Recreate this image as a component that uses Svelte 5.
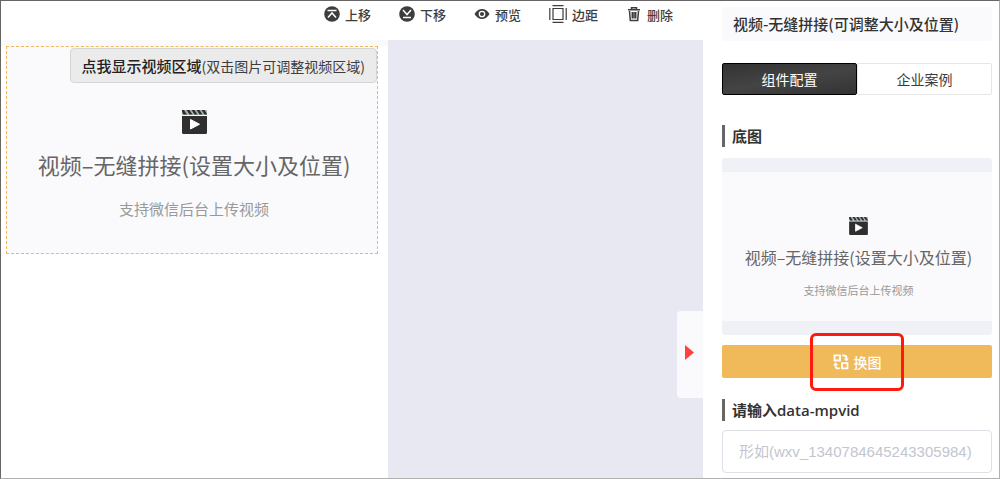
<script>
	let tab = $state('config');
	let mpvid = $state('');
	let panelOpen = $state(true);
</script>

{#snippet clapper()}
	<svg class="clapper" viewBox="0 0 25 24" aria-hidden="true">
		<path fill="#2f2f2f" d="M0 6h25v16.500q0 1.500-1.500 1.500h-22Q0 24 0 22.500z" />
		<path fill="#a9b5b1" d="M0 0h25v5H0z" />
		<path
			fill="#2f2f2f"
			d="M0 0h2l3 4.500H1.500L0 2zM4.500 0h3l3 4.500h-3zM9.500 0h3l3 4.500h-3zM14.500 0h3l3 4.500h-3zM19.500 0h3L25 4v.5h-2.500z"
		/>
		<path fill="#fff" stroke="#fff" stroke-linejoin="round" d="M8.500 9.500v9.500l9-4.750z" />
	</svg>
{/snippet}

{#snippet cover()}
	{@render clapper()}
	<p class="cover-title">视频–无缝拼接(设置大小及位置)</p>
	<p class="cover-note">支持微信后台上传视频</p>
{/snippet}

<div class="editor">
	<main>
		<div class="toolbar">
			<button type="button">
				<svg viewBox="0 0 16 16" aria-hidden="true">
					<circle cx="8" cy="8" r="7.800" fill="#3d3d3d" />
					<path d="M3.500 4.500h9M4 11.500l4-4.500 4 4.500" fill="none" stroke="#fff" stroke-width="1.500" />
				</svg>
				上移
			</button>
			<button type="button">
				<svg viewBox="0 0 16 16" aria-hidden="true">
					<circle cx="8" cy="8" r="7.800" fill="#3d3d3d" />
					<path d="M4 4l4 4.500L12 4M4 11.500h8" fill="none" stroke="#fff" stroke-width="1.500" />
				</svg>
				下移
			</button>
			<button type="button">
				<svg viewBox="0 0 16 16" aria-hidden="true">
					<path fill="#3d3d3d" d="M.5 8Q3.500 3 8 3t7.500 5Q12.500 13 8 13T.5 8z" />
					<circle cx="8" cy="8" r="2.700" fill="#3d3d3d" stroke="#fff" stroke-width="1.300" />
				</svg>
				预览
			</button>
			<button type="button">
				<svg class="wide" viewBox="0 0 18 18" aria-hidden="true">
					<path
						fill="none"
						stroke="#3d3d3d"
						stroke-width="1.200"
						d="M4 3.500h10v11H4zM3.500.7h11M3.500 17.300h11M.8 3v12M17.200 3v12"
					/>
				</svg>
				边距
			</button>
			<button type="button">
				<svg viewBox="0 0 16 16" aria-hidden="true">
					<path
						fill="none"
						stroke="#3d3d3d"
						stroke-width="1.500"
						d="M2 3.800h12M5.500 3.500V1.700h5v1.800M3.500 5l.8 9.500h7.400l.8-9.500M6.300 6v6.500M8 6v6.500M9.700 6v6.500"
					/>
				</svg>
				删除
			</button>
		</div>

		<div class="stage">
			<div class="page">
				<div class="block">
					<button type="button" class="reveal"><b>点我显示视频区域</b>(双击图片可调整视频区域)</button>
					{@render cover()}
				</div>
			</div>
			<button
				type="button"
				class="handle"
				aria-label="收起面板"
				aria-expanded={panelOpen}
				onclick={() => (panelOpen = !panelOpen)}
			>
				<svg viewBox="0 0 9 15" aria-hidden="true"><path fill="#ff4040" d="M0 0l9 7.500L0 15z" /></svg>
			</button>
		</div>
	</main>

	{#if panelOpen}
		<aside>
			<h1>视频-无缝拼接(可调整大小及位置)</h1>

			<div class="tabs" role="tablist">
				<button
					type="button"
					role="tab"
					aria-selected={tab === 'config'}
					class:active={tab === 'config'}
					onclick={() => (tab = 'config')}>组件配置</button
				>
				<button
					type="button"
					role="tab"
					aria-selected={tab === 'cases'}
					class:active={tab === 'cases'}
					onclick={() => (tab = 'cases')}>企业案例</button
				>
			</div>

			<h2>底图</h2>
			<div class="thumb">
				<div class="thumb-inner">{@render cover()}</div>
			</div>

			<div class="swap-row">
				<button type="button" class="swap">
					<svg viewBox="0 0 16 16" aria-hidden="true">
						<path
							fill="none"
							stroke="#fff"
							stroke-width="1.800"
							d="M1.500 1.300h5.500v5.200h-5.500zM9 9.200h5.500v5.200h-5.500zM9.200 1.500h1.800q2.500 0 2.500 2.500v2M6.800 14.400h-1.800q-2.500 0-2.500-2.500v-2"
						/>
						<path fill="#fff" d="M10.800 4.600h5.200l-2.600 3zM0 11.300h5.200l-2.600-3z" />
					</svg>
					换图
				</button>
				<span class="marker"></span>
			</div>

			<h2><label for="mpvid">请输入data-mpvid</label></h2>
			<input id="mpvid" type="text" placeholder="形如(wxv_1340784645243305984)" bind:value={mpvid} />
		</aside>
	{/if}
</div>

<style>
	:global(body) {
		margin: 0;
		background: #fff;
		color: #3d3d3d;
		font-family: 'Noto Sans CJK SC', sans-serif;
	}

	.editor {
		box-sizing: border-box;
		display: flex;
		min-height: 100vh;
		border: 1px solid #b0b0b0;
		border-top-color: #666;
		border-left-color: #666;
	}

	main {
		display: flex;
		flex: 1;
		flex-direction: column;
		min-width: 0;
	}

	button {
		padding: 0;
		border: 0;
		background: none;
		color: inherit;
		font-family: inherit;
		cursor: pointer;
	}

	h1,
	h2,
	p {
		margin: 0;
	}

	.toolbar {
		display: flex;
		justify-content: flex-end;
		gap: 28px;
		height: 39px;
		padding-right: 30px;
	}

	.toolbar button {
		display: flex;
		align-items: center;
		gap: 5px;
		height: 26px;
		font-size: 13px;
		font-weight: 500;
	}

	.toolbar svg {
		width: 16px;
		height: 16px;
	}

	.toolbar .wide {
		width: 18px;
		height: 18px;
	}

	.stage {
		display: flex;
		flex: 1;
		align-items: stretch;
		justify-content: space-between;
		background: #e7e8f2;
	}

	.page {
		box-sizing: border-box;
		width: 387px;
		padding: 0 10px 0 5px;
		border-top: 6px solid #fafafa;
		background: #fff;
	}

	.block {
		position: relative;
		display: flex;
		box-sizing: border-box;
		flex-direction: column;
		align-items: center;
		min-height: 208px;
		padding: 63px 0 0 4px;
		border: 1px dashed #f0b959;
		background: #fafafc;
	}

	.reveal {
		position: absolute;
		top: 1px;
		right: 0;
		height: 35px;
		padding: 0 11px;
		border: 1px solid #d6d6d6;
		border-radius: 4px;
		background: #ebebeb;
		font-size: 14px;
		line-height: 30px;
		white-space: nowrap;
	}

	.reveal b {
		font-size: 15px;
		font-weight: 500;
		color: #222;
	}

	.clapper {
		width: 25px;
		height: 24px;
	}

	.cover-title {
		margin-top: 14px;
		color: #666;
		font-size: 22px;
		line-height: 32px;
		white-space: nowrap;
	}

	.cover-note {
		margin-top: 18px;
		color: #999;
		font-size: 15px;
		line-height: 22px;
	}

	.handle {
		display: flex;
		align-items: center;
		width: 26px;
		height: 87px;
		margin-top: 271px;
		padding: 0 8px 4px;
		border-radius: 4px 0 0 4px;
		background: #fafafc;
	}

	.handle svg {
		flex: none;
		width: 9px;
		height: 15px;
	}

	aside {
		box-sizing: border-box;
		width: 296px;
		padding: 6px 7px 4px 19px;
	}

	h1 {
		padding: 0 11px;
		border-radius: 3px;
		background: #fafafc;
		color: #333;
		font-size: 15px;
		font-weight: 500;
		line-height: 34px;
		white-space: nowrap;
	}

	.tabs {
		display: flex;
		margin: 22px 0 30px;
	}

	.tabs button {
		flex: 1;
		height: 32px;
		border: 1px solid #e6e6e6;
		border-radius: 2px;
		font-size: 14px;
	}

	.tabs .active {
		border-color: #000;
		background: linear-gradient(170deg, #333, #444 50%, #333);
		color: #fff;
	}

	h2 {
		padding-left: 7px;
		border-left: 3px solid #666;
		color: #333;
		font-family: 'Open Sans', 'Noto Sans CJK SC', sans-serif;
		font-size: 15px;
		font-weight: 600;
		line-height: 22px;
	}

	.thumb {
		margin: 11px 0 10px;
		padding: 14px 0;
		border-radius: 3px;
		background: #f0f1f6;
	}

	.thumb-inner {
		display: flex;
		box-sizing: border-box;
		flex-direction: column;
		align-items: center;
		min-height: 149px;
		padding: 45px 0 0 3px;
		background: #fafafc;
	}

	.thumb .clapper {
		width: 19px;
		height: 18px;
	}

	.thumb .cover-title {
		margin-top: 10px;
		font-size: 16px;
		line-height: 24px;
	}

	.thumb .cover-note {
		margin-top: 13px;
		font-size: 11px;
		line-height: 16px;
	}

	.swap-row {
		position: relative;
		margin-bottom: 21px;
	}

	.swap {
		display: flex;
		align-items: center;
		justify-content: center;
		gap: 5px;
		width: 100%;
		height: 33px;
		border-radius: 2px;
		background: #f0b959;
		color: #fff;
		font-size: 14px;
		font-weight: 500;
	}

	.swap svg {
		width: 16px;
		height: 16px;
	}

	.marker {
		position: absolute;
		top: 50%;
		left: 50%;
		box-sizing: border-box;
		width: 94px;
		height: 58px;
		border: 3px solid #fe1a0c;
		border-radius: 6px;
		transform: translate(-50%, -50%);
		pointer-events: none;
	}

	input {
		box-sizing: border-box;
		width: 100%;
		height: 43px;
		margin-top: 9px;
		padding: 0 16px;
		border: 1px solid #dfdfe8;
		border-radius: 4px;
		background: #fff;
		color: #333;
		font-family: 'Liberation Sans', 'Noto Sans CJK SC', sans-serif;
		font-size: 15px;
	}

	input::placeholder {
		color: #c3c5cf;
		opacity: 1;
	}
</style>
